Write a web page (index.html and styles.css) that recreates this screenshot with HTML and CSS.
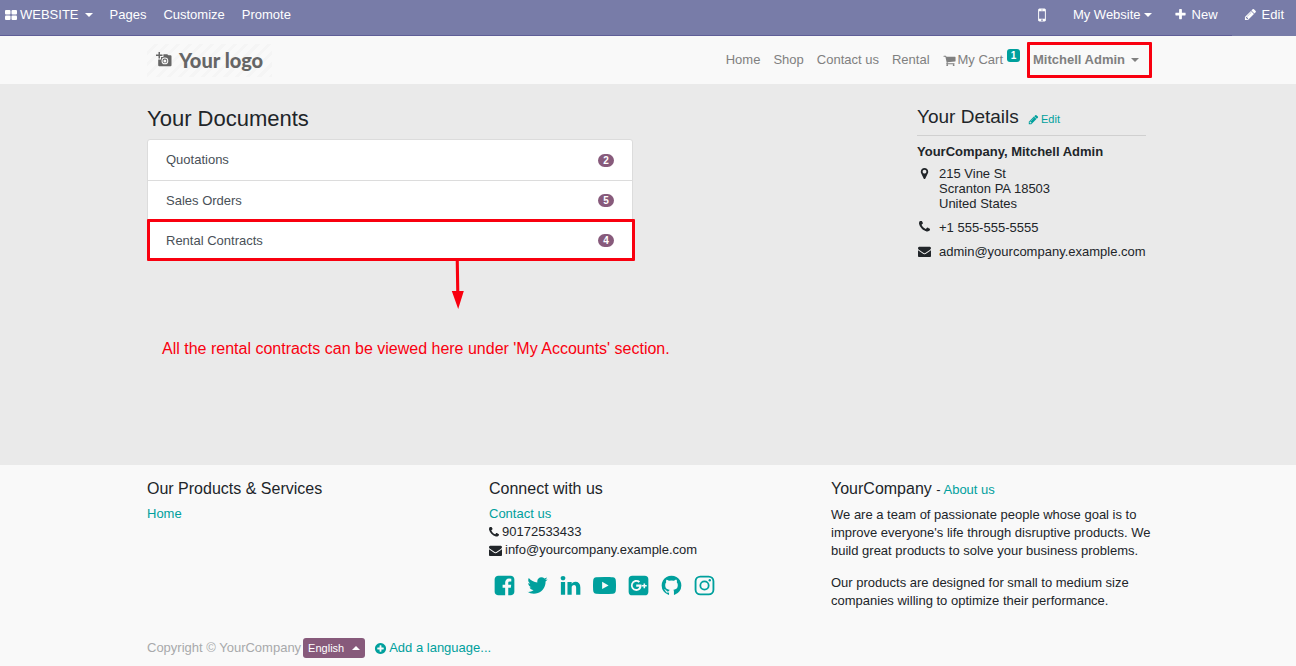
FILE: index.html
```html
<!DOCTYPE html>
<html lang="en">
<head>
<meta charset="utf-8">
<title>My Account | My Website</title>
<link rel="stylesheet" href="styles.css">
</head>
<body>
<svg class="sprite" aria-hidden="true">
  <symbol id="i-grid" viewBox="0 0 12 10"><rect width="5.5" height="4.5" rx="1"/><rect x="6.5" width="5.5" height="4.5" rx="1"/><rect y="5.5" width="5.5" height="4.5" rx="1"/><rect x="6.5" y="5.5" width="5.5" height="4.5" rx="1"/></symbol>
  <symbol id="i-pencil" viewBox="0 0 1792 1792"><path d="M491 1536l91-91-235-235-91 91v107h128v128h107zm523-928q0-22-22-22-10 0-17 7l-542 542q-7 7-7 17 0 22 22 22 10 0 17-7l542-542q7-7 7-17zm-54-192l416 416-832 832h-416v-416zm683 96q0 53-37 90l-166 166-416-416 166-165q36-38 90-38 53 0 91 38l235 234q37 39 37 91z"/></symbol>
  <symbol id="i-plus" viewBox="0 0 1792 1792"><path d="M1600 736v192q0 40-28 68t-68 28h-416v416q0 40-28 68t-68 28h-192q-40 0-68-28t-28-68v-416h-416q-40 0-68-28t-28-68v-192q0-40 28-68t68-28h416v-416q0-40 28-68t68-28h192q40 0 68 28t28 68v416h416q40 0 68 28t28 68z"/></symbol>
  <symbol id="i-plus-circle" viewBox="0 0 1792 1792"><path d="M1344 960v-128q0-26-19-45t-45-19h-256v-256q0-26-19-45t-45-19h-128q-26 0-45 19t-19 45v256h-256q-26 0-45 19t-19 45v128q0 26 19 45t45 19h256v256q0 26 19 45t45 19h128q26 0 45-19t19-45v-256h256q26 0 45-19t19-45zm320-64q0 209-103 385.5t-279.5 279.5-385.5 103-385.5-103-279.5-279.5-103-385.5 103-385.5 279.5-279.5 385.5-103 385.5 103 279.5 279.5 103 385.5z"/></symbol>
  <symbol id="i-cart" viewBox="0 0 1792 1792"><path d="M704 1536q0 52-38 90t-90 38-90-38-38-90 38-90 90-38 90 38 38 90zm896 0q0 52-38 90t-90 38-90-38-38-90 38-90 90-38 90 38 38 90zm128-1088v512q0 24-16.500 42.500t-40.500 21.500l-1044 122q13 60 13 70 0 16-24 64h920q26 0 45 19t19 45-19 45-45 19h-1024q-26 0-45-19t-19-45q0-11 8-31.500t16-36 21.500-40 15.500-29.500l-177-823h-204q-26 0-45-19t-19-45 19-45 45-19h256q16 0 28.500 6.500t19.500 15.500 13 24.500 8 26 5.500 29.500 4.500 26h1201q26 0 45 19t19 45z"/></symbol>
  <symbol id="i-phone" viewBox="192 192 1408 1408"><path d="M1600 1240q0 27-10 70.500t-21 68.500q-21 50-122 106-94 51-186 51-27 0-53-3.500t-57.500-12.500-47-14.500-55.500-20.500-49-18q-98-35-175-83-127-79-264-216t-216-264q-48-77-83-175-3-9-18-49t-20.500-55.500-14.500-47-12.500-57.500-3.500-53q0-92 51-186 56-101 106-122 25-11 68.500-21t70.500-10q14 0 21 3 18 6 53 76 11 19 30 54t35 63.500 31 53.500q3 4 17.500 25t21.500 35.500 7 28.500q0 20-28.500 50t-62 55-62 53-28.500 46q0 9 5 22.500t8.500 20.500 14 24 11.500 19q76 137 174 235t235 174q2 1 19 11.500t24 14 20.500 8.500 22.500 5q18 0 46-28.500t53-62 55-62 50-28.500q14 0 28.500 7t35.500 21.500 25 17.500q25 15 53.500 31t63.500 35 54 30q70 35 76 53 3 7 3 21z"/></symbol>
  <symbol id="i-envelope" viewBox="0 0 1792 1792"><path d="M1792 710v794q0 66-47 113t-113 47h-1472q-66 0-113-47t-47-113v-794q44 49 101 87 362 246 497 345 57 42 92.500 65.500t94.500 48 110 24.500h2q51 0 110-24.500t94.500-48 92.500-65.500q170-123 498-345 57-39 100-87zm0-294q0 79-49 151t-122 123q-376 261-468 325-10 7-42.500 31t-54 38.500-52 32.500-57.500 27-50 9h-2q-23 0-50-9t-57.500-27-52-32.500-54-38.500-42.500-31q-91-64-262-182.500t-205-142.500q-62-42-117-115.500t-55-136.500q0-78 41.500-130t118.500-52h1472q65 0 112.500 47t47.500 113z"/></symbol>
  <symbol id="i-marker" viewBox="0 0 1792 1792"><path d="M1152 640q0-106-75-181t-181-75-181 75-75 181 75 181 181 75 181-75 75-181zm256 0q0 109-33 179l-364 774q-16 33-47.500 52t-67.500 19-67.500-19-46.500-52l-365-774q-33-70-33-179 0-212 150-362t362-150 362 150 150 362z"/></symbol>
  <symbol id="i-mobile" viewBox="0 0 1792 1792"><path d="M976 1408q0-33-23.500-56.500t-56.500-23.500-56.500 23.500-23.500 56.500 23.500 56.500 56.500 23.500 56.500-23.500 23.500-56.500zm208-160v-704q0-13-9.500-22.500t-22.500-9.500h-512q-13 0-22.500 9.500t-9.500 22.500v704q0 13 9.500 22.500t22.500 9.500h512q13 0 22.500-9.500t9.500-22.500zm-192-848q0-16-16-16h-160q-16 0-16 16t16 16h160q16 0 16-16zm288-16v1024q0 52-38 90t-90 38h-512q-52 0-90-38t-38-90v-1024q0-52 38-90t90-38h512q52 0 90 38t38 90z"/></symbol>
  <symbol id="i-facebook" viewBox="0 0 1792 1792"><path d="M1376 128q119 0 203.500 84.500t84.500 203.500v960q0 119-84.500 203.500t-203.500 84.500h-188v-595h199l30-232h-229v-148q0-56 23.500-84t91.500-28l122-1v-207q-63-9-178-9-136 0-217.500 80t-81.500 226v171h-200v232h200v595h-532q-119 0-203.500-84.500t-84.500-203.500v-960q0-119 84.500-203.500t203.500-84.500h960z"/></symbol>
  <symbol id="i-twitter" viewBox="0 0 1792 1792"><path d="M1684 408q-67 98-162 167 1 14 1 42 0 130-38 259.500t-115.500 248.500-184.500 210.500-258 146-323 54.500q-271 0-496-145 35 4 78 4 225 0 401-138-105-2-188-64.500t-114-159.500q33 5 61 5 43 0 85-11-112-23-185.500-111.500t-73.500-205.500v-4q68 38 146 41-66-44-105-115t-39-154q0-88 44-163 121 149 294.500 238.500t371.500 99.500q-8-38-8-74 0-134 94.500-228.500t228.500-94.500q140 0 236 102 109-21 205-78-37 115-142 178 93-10 186-50z"/></symbol>
  <symbol id="i-linkedin" viewBox="0 0 1792 1792"><path d="M477 625v991h-330v-991h330zm21-306q1 73-50.500 122t-135.500 49h-2q-82 0-132-49t-50-122q0-74 51.500-122.500t134.500-48.500 133 48.500 51 122.500zm1166 729v568h-329v-530q0-105-40.500-164.500t-126.500-59.500q-63 0-105.500 34.500t-63.500 85.500q-11 30-11 81v553h-329q2-399 2-647t-1-296l-1-48h329v144h-2q20-32 41-56t56.500-52 87-43.500 114.500-15.500q171 0 275 113.500t104 332.500z"/></symbol>
  <symbol id="i-youtube" viewBox="0 0 1792 1792"><path fill-rule="evenodd" d="M896 128C1230 128 1400 140 1560 153Q1700 163 1755 305Q1792 420 1792 822V970Q1792 1372 1755 1487Q1700 1629 1560 1639Q1230 1664 896 1664Q562 1664 232 1639Q92 1629 37 1487Q0 1372 0 970V822Q0 420 37 305Q92 163 232 153Q562 128 896 128zM711 560V1215L1216 888z" transform="translate(0 122) scale(1 .864)"/></symbol>
  <symbol id="i-gplus" viewBox="0 0 1792 1792"><path fill-rule="evenodd" d="M416 128h960a288 288 0 0 1 288 288v960a288 288 0 0 1-288 288H416a288 288 0 0 1-288-288V416a288 288 0 0 1 288-288zM718 820v166h236c-20 124-122 192-235 192a282 282 0 1 1 184-496l118-116a434 434 0 1 0-302 762c250 0 414-176 414-426q0-40-8-82zM1287 732v126h-126v124h126v126h124v-126h126v-124h-126V732z"/></symbol>
  <symbol id="i-github" viewBox="0 0 1792 1792"><path d="M896 128q209 0 385.500 103t279.500 279.500 103 385.500q0 251-146.500 451.500t-378.500 277.500q-27 5-40-7t-13-30q0-3 .5-76.500t.5-134.500q0-97-52-142 57-6 102.500-18t94-39 81-66.500 53-105 20.500-150.500q0-119-79-206 37-91-8-204-28-9-81 11t-92 44l-38 24q-93-26-192-26t-192 26q-16-11-42.500-27t-83.500-38.500-85-13.500q-45 113-8 204-79 87-79 206 0 85 20.500 150t52.500 105 80.500 67 94 39 102.500 18q-39 36-49 103-21 10-45 15t-57 5-65.500-21.500-55.500-62.500q-19-32-48.500-52t-49.500-24l-20-3q-21 0-29 4.500t-5 11.500 9 14 13 12l7 5q22 10 43.500 38t31.500 51l10 23q13 38 44 61.500t67 30 69.500 7 55.500-3.500l23-4q0 38 .5 88.500t.5 54.500q0 18-13 30t-40 7q-232-77-378.500-277.500t-146.500-451.500q0-209 103-385.500t279.500-279.500 385.500-103z"/></symbol>
  <symbol id="i-instagram" viewBox="0 0 1792 1792"><rect x="200" y="200" width="1392" height="1392" rx="370" fill="none" stroke="currentColor" stroke-width="144"/><circle cx="896" cy="896" r="325" fill="none" stroke="currentColor" stroke-width="140"/><circle cx="1306" cy="486" r="92"/></symbol>
  <symbol id="i-camera" viewBox="0 0 16 15"><path d="M2.500 0h1.500v2.500H6.500V4H4v2.500H2.500V4H0V2.500h2.500z"/><path fill-rule="evenodd" d="M5 5H7.400V2.200H11.200L12.400 3.300H14.500Q15.500 3.300 15.500 4.300V13.200Q15.500 14.200 14.500 14.200H3.200Q2.200 14.200 2.200 13.200V7.500H5zM8.900 5.500a3.400 3.400 0 1 0 0 6.800a3.400 3.400 0 1 0 0-6.800zM8.900 6.500a2.400 2.400 0 1 1 0 4.800a2.400 2.400 0 1 1 0-4.800zM8.900 7.400a1.500 1.500 0 1 0 0 3a1.500 1.500 0 1 0 0-3z"/></symbol>
</svg>

<header>
  <div class="topbar">
    <nav class="topbar-main" aria-label="Website tools">
      <button class="tool apps" type="button"><svg class="grid-icon"><use href="#i-grid"/></svg>WEBSITE <span class="caret"></span></button>
      <a class="tool" href="#pages">Pages</a>
      <a class="tool" href="#customize">Customize</a>
      <a class="tool" href="#promote">Promote</a>
      <div class="topbar-right">
        <button class="tool" type="button" aria-label="Mobile preview"><svg class="icon icon-mobile"><use href="#i-mobile"/></svg></button>
        <button class="tool" type="button">My Website<span class="caret"></span></button>
        <button class="tool spaced" type="button"><svg class="icon"><use href="#i-plus"/></svg>New</button>
      </div>
    </nav>
    <button class="tool spaced topbar-edit" type="button"><svg class="icon"><use href="#i-pencil"/></svg>Edit</button>
  </div>
  <div class="site-header">
    <div class="container header-row">
      <a class="logo" href="#home"><svg class="logo-icon"><use href="#i-camera"/></svg>Your logo</a>
      <nav class="site-nav" aria-label="Main">
        <a href="#home">Home</a>
        <a href="#shop">Shop</a>
        <a href="#contact">Contact us</a>
        <a href="#rental">Rental</a>
        <a class="cart" href="#cart"><svg class="icon"><use href="#i-cart"/></svg>My Cart<span class="cart-badge">1</span></a>
        <button class="account" type="button">Mitchell Admin<span class="caret caret-far"></span></button>
      </nav>
    </div>
  </div>
</header>

<main>
  <div class="container account-grid">
    <section class="documents">
      <h1>Your Documents</h1>
      <div class="doc-list">
        <a href="#quotations">Quotations <span class="pill">2</span></a>
        <a href="#orders">Sales Orders <span class="pill">5</span></a>
        <a class="highlighted" href="#contracts">Rental Contracts <span class="pill">4</span></a>
        <svg class="arrow" viewBox="0 0 14 50" aria-hidden="true"><path d="M4.700 0h3.100l.5 31h4.500L7.200 49 .8 31h4.400z"/></svg>
      </div>
      <p class="note">All the rental contracts can be viewed here under 'My Accounts' section.</p>
    </section>
    <aside class="details">
      <h2>Your Details <a href="#edit"><svg class="icon icon-small"><use href="#i-pencil"/></svg>Edit</a></h2>
      <address>
        <strong>YourCompany, Mitchell Admin</strong>
        <div class="contact-row"><svg class="icon"><use href="#i-marker"/></svg><span>215 Vine St<br>Scranton PA 18503<br>United States</span></div>
        <div class="contact-row"><svg class="icon"><use href="#i-phone"/></svg><span>+1 555-555-5555</span></div>
        <div class="contact-row"><svg class="icon"><use href="#i-envelope"/></svg><span>admin@yourcompany.example.com</span></div>
      </address>
    </aside>
  </div>
</main>

<footer>
  <div class="container footer-grid">
    <section>
      <h3>Our Products &amp; Services</h3>
      <a href="#home">Home</a>
    </section>
    <section>
      <h3>Connect with us</h3>
      <ul class="connect">
        <li><a href="#contact">Contact us</a></li>
        <li><svg class="icon icon-phone"><use href="#i-phone"/></svg>90172533433</li>
        <li><svg class="icon"><use href="#i-envelope"/></svg>info@yourcompany.example.com</li>
      </ul>
      <div class="social">
        <a href="#facebook" aria-label="Facebook"><svg><use href="#i-facebook"/></svg></a>
        <a href="#twitter" aria-label="Twitter"><svg><use href="#i-twitter"/></svg></a>
        <a href="#linkedin" aria-label="LinkedIn"><svg><use href="#i-linkedin"/></svg></a>
        <a class="wide" href="#youtube" aria-label="YouTube"><svg><use href="#i-youtube"/></svg></a>
        <a href="#googleplus" aria-label="Google Plus"><svg><use href="#i-gplus"/></svg></a>
        <a href="#github" aria-label="GitHub"><svg><use href="#i-github"/></svg></a>
        <a href="#instagram" aria-label="Instagram"><svg><use href="#i-instagram"/></svg></a>
      </div>
    </section>
    <section>
      <h3>YourCompany <small>- <a href="#about">About us</a></small></h3>
      <p>We are a team of passionate people whose goal is to improve everyone's life through disruptive products. We build great products to solve your business problems.</p>
      <p>Our products are designed for small to medium size companies willing to optimize their performance.</p>
    </section>
  </div>
  <div class="container legal">
    <span class="copyright">Copyright © YourCompany</span>
    <button class="language" type="button">English <span class="caret caret-up"></span></button>
    <a class="add-language" href="#language"><svg class="icon"><use href="#i-plus-circle"/></svg>Add a language...</a>
  </div>
</footer>
</body>
</html>
```

FILE: styles.css
```css
* { box-sizing: border-box; }

body {
  margin: 0;
  min-height: 100vh;
  display: flex;
  flex-direction: column;
  background: #f9f9f9;
  color: #212529;
  font: 13px/18px "Liberation Sans", Arial, sans-serif;
}

h1, h2, h3, p, ul { margin: 0; padding: 0; font-weight: 400; }
ul { list-style: none; }
a { color: #00a09d; text-decoration: none; }
button { font: inherit; color: inherit; background: none; border: 0; padding: 0; cursor: pointer; }
svg { fill: currentColor; flex: none; }

.sprite { position: absolute; width: 0; height: 0; }
.icon { width: 13px; height: 13px; }
.icon-small { width: 11px; height: 11px; }
.icon-mobile { width: 18px; height: 18px; }

.caret {
  display: inline-block;
  margin-left: 3px;
  border: 4px solid transparent;
  border-top-color: currentColor;
  border-bottom: 0;
}
.caret-far { margin-left: 6px; }
.caret-up { border-top: 0; border-bottom: 4px solid currentColor; }

.container { width: 100%; max-width: 1026px; margin: 0 auto; padding: 0 12px; }

/* Editor bar */
.topbar { display: flex; height: 36px; background: #787ca8; color: #fff; }
.topbar-main {
  flex: 1;
  display: flex;
  align-items: stretch;
  gap: 17px;
  padding-left: 5px;
  border-bottom: 1px solid #5f5e97;
}
.topbar-right { display: flex; gap: 22px; margin-left: auto; padding-right: 14px; }
.tool { display: flex; align-items: center; padding-bottom: 6px; color: #fff; white-space: nowrap; }
.topbar-edit { padding: 0 12px 7px; }
.apps { gap: 3px; }
.spaced { gap: 5px; }
.grid-icon { width: 12px; height: 10px; }

/* Site header */
.site-header { background: #f9f9f9; }
.header-row { display: flex; align-items: center; justify-content: space-between; height: 48px; }
.logo {
  display: flex;
  align-items: center;
  gap: 7px;
  height: 33px;
  padding: 0 9px;
  color: #666;
  font: 900 20px/24px Lato, "Open Sans", sans-serif;
  background: repeating-linear-gradient(135deg, #f9f9f9 0 5px, #f5f5f5 5px 8px);
}
.logo-icon { width: 16px; height: 15px; margin-bottom: 2px; }
.site-nav { display: flex; align-items: center; gap: 13px; color: #808080; }
.site-nav a { color: inherit; }
.cart { display: flex; align-items: center; gap: 2px; }
.cart-badge {
  align-self: flex-start;
  margin: -2px 0 0 2px;
  width: 13px;
  border-radius: 3px;
  background: #00a09d;
  color: #fff;
  font-size: 10px;
  font-weight: 700;
  line-height: 13px;
  text-align: center;
}
.account { position: relative; display: flex; align-items: center; padding-right: 10px; font-weight: 700; }
.account::after, .highlighted::after {
  content: "";
  position: absolute;
  border: 3px solid #f9000f;
  border-radius: 1px;
}
.account::after { inset: -9px -3px -9px -6px; }

/* Account page */
main { background: #eaeaea; }
.account-grid {
  display: grid;
  grid-template-columns: minmax(0, 486px) 232px;
  justify-content: space-between;
  min-height: 381px;
  padding-top: 21px;
}
.documents h1 { margin-bottom: 6px; font-size: 22px; line-height: 28px; }
.doc-list { position: relative; border: 1px solid #dcdcdc; border-radius: 3px; background: #fff; }
.doc-list a {
  position: relative;
  display: flex;
  align-items: center;
  justify-content: space-between;
  height: 40px;
  padding: 0 18px;
  color: #495057;
}
.doc-list a + a { border-top: 1px solid #dcdcdc; }
.highlighted::after { inset: -2px -3px -1px -1px; }
.pill {
  width: 16px;
  border-radius: 7px;
  background: #875a7b;
  color: #fff;
  font-size: 10px;
  font-weight: 700;
  line-height: 13px;
  text-align: center;
}
.arrow { position: absolute; top: 120px; left: 303px; width: 14px; height: 50px; fill: #f9000f; }
.note { margin: 79px 0 0 15px; color: #f9000f; font-size: 16px; line-height: 18px; white-space: nowrap; }

.details { padding-right: 3px; }
.details h2 {
  padding-bottom: 4px;
  margin-bottom: 8px;
  border-bottom: 1px solid #d0d0d0;
  font-size: 19px;
  line-height: 24px;
}
.details h2 a { margin-left: 4px; font-size: 11px; }
.details h2 svg { margin-right: 2px; vertical-align: -2px; }
address { display: grid; gap: 9px; font-style: normal; line-height: 15px; }
address strong { margin-bottom: -2px; }
.contact-row { display: flex; gap: 8px; padding-left: 1px; }
.contact-row .icon { margin-top: 1px; }
.contact-row .icon:has([href="#i-phone"]) { height: 11px; }

/* Footer */
footer { flex: 1; padding-top: 14px; }
.footer-grid {
  display: grid;
  grid-template-columns: repeat(3, minmax(0, 1fr));
  gap: 12px;
  padding-right: 0;
}
footer h3 { margin-bottom: 7px; font-size: 16px; line-height: 19px; }
footer small { font-size: 13px; }
footer p + p { margin-top: 14px; }
.connect li { display: flex; align-items: center; gap: 3px; }
.icon-phone { width: 10px; height: 10px; }
.social { display: flex; gap: 10px; margin: 15px 0 0 4px; }
.social a { display: flex; }
.social .wide { padding: 0 1px; }
.social svg { width: 23px; height: 23px; }
.legal { display: flex; align-items: center; margin-top: 28px; gap: 2px; }
.copyright { color: #a8a9ab; }
.language {
  display: flex;
  align-items: center;
  gap: 5px;
  height: 20px;
  padding: 0 5px;
  border-radius: 3px;
  background: #875a7b;
  color: #fff;
  font-size: 11px;
}
.add-language { display: flex; align-items: center; gap: 2px; margin-left: 7px; }
```
